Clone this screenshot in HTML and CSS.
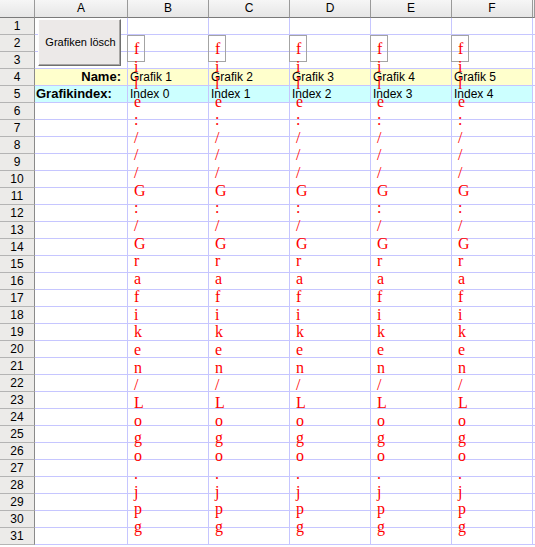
FILE: index.html
```html
<!DOCTYPE html>
<html lang="de">
<head>
  <meta charset="UTF-8" />
  <title>Grafiken</title>
  <link rel="stylesheet" href="styles.css">
</head>
<body>
  <div class="sheet">
    <div class="row head">
      <div class="corner"></div>
      <div class="col">A</div><div class="col">B</div><div class="col">C</div>
      <div class="col">D</div><div class="col">E</div><div class="col">F</div>
      <div class="col"></div>
    </div>

    <div class="row">
      <div class="num">1</div>
      <div class="cell anchor"><button class="btn">Grafiken lösch</button></div>
      <div class="cell"></div><div class="cell"></div><div class="cell"></div>
      <div class="cell"></div><div class="cell"></div><div class="cell"></div>
    </div>

    <!-- linked pictures that fail to load show their path as alt text -->
    <div class="row">
      <div class="num">2</div>
      <div class="cell"></div>
      <div class="cell anchor"><span class="pic"><span class="alt">file:///G:/Grafiken/Logo.jpg</span></span></div>
      <div class="cell anchor"><span class="pic"><span class="alt">file:///G:/Grafiken/Logo.jpg</span></span></div>
      <div class="cell anchor"><span class="pic"><span class="alt">file:///G:/Grafiken/Logo.jpg</span></span></div>
      <div class="cell anchor"><span class="pic"><span class="alt">file:///G:/Grafiken/Logo.jpg</span></span></div>
      <div class="cell anchor"><span class="pic"><span class="alt">file:///G:/Grafiken/Logo.jpg</span></span></div>
      <div class="cell"></div>
    </div>

    <div class="row">
      <div class="num">3</div>
      <div class="cell"></div><div class="cell"></div><div class="cell"></div><div class="cell"></div>
      <div class="cell"></div><div class="cell"></div><div class="cell"></div>
    </div>

    <div class="row name">
      <div class="num">4</div>
      <div class="cell label right">Name:</div>
      <div class="cell">Grafik 1</div><div class="cell">Grafik 2</div><div class="cell">Grafik 3</div>
      <div class="cell">Grafik 4</div><div class="cell">Grafik 5</div>
      <div class="cell blank"></div>
    </div>

    <div class="row index">
      <div class="num">5</div>
      <div class="cell label">Grafikindex:</div>
      <div class="cell">Index 0</div><div class="cell">Index 1</div><div class="cell">Index 2</div>
      <div class="cell">Index 3</div><div class="cell">Index 4</div>
      <div class="cell blank"></div>
    </div>

    <div class="row"><div class="num">6</div><div class="cell"></div><div class="cell"></div><div class="cell"></div><div class="cell"></div><div class="cell"></div><div class="cell"></div><div class="cell"></div></div>
    <div class="row"><div class="num">7</div><div class="cell"></div><div class="cell"></div><div class="cell"></div><div class="cell"></div><div class="cell"></div><div class="cell"></div><div class="cell"></div></div>
    <div class="row"><div class="num">8</div><div class="cell"></div><div class="cell"></div><div class="cell"></div><div class="cell"></div><div class="cell"></div><div class="cell"></div><div class="cell"></div></div>
    <div class="row"><div class="num">9</div><div class="cell"></div><div class="cell"></div><div class="cell"></div><div class="cell"></div><div class="cell"></div><div class="cell"></div><div class="cell"></div></div>
    <div class="row"><div class="num">10</div><div class="cell"></div><div class="cell"></div><div class="cell"></div><div class="cell"></div><div class="cell"></div><div class="cell"></div><div class="cell"></div></div>
    <div class="row"><div class="num">11</div><div class="cell"></div><div class="cell"></div><div class="cell"></div><div class="cell"></div><div class="cell"></div><div class="cell"></div><div class="cell"></div></div>
    <div class="row"><div class="num">12</div><div class="cell"></div><div class="cell"></div><div class="cell"></div><div class="cell"></div><div class="cell"></div><div class="cell"></div><div class="cell"></div></div>
    <div class="row"><div class="num">13</div><div class="cell"></div><div class="cell"></div><div class="cell"></div><div class="cell"></div><div class="cell"></div><div class="cell"></div><div class="cell"></div></div>
    <div class="row"><div class="num">14</div><div class="cell"></div><div class="cell"></div><div class="cell"></div><div class="cell"></div><div class="cell"></div><div class="cell"></div><div class="cell"></div></div>
    <div class="row"><div class="num">15</div><div class="cell"></div><div class="cell"></div><div class="cell"></div><div class="cell"></div><div class="cell"></div><div class="cell"></div><div class="cell"></div></div>
    <div class="row"><div class="num">16</div><div class="cell"></div><div class="cell"></div><div class="cell"></div><div class="cell"></div><div class="cell"></div><div class="cell"></div><div class="cell"></div></div>
    <div class="row"><div class="num">17</div><div class="cell"></div><div class="cell"></div><div class="cell"></div><div class="cell"></div><div class="cell"></div><div class="cell"></div><div class="cell"></div></div>
    <div class="row"><div class="num">18</div><div class="cell"></div><div class="cell"></div><div class="cell"></div><div class="cell"></div><div class="cell"></div><div class="cell"></div><div class="cell"></div></div>
    <div class="row"><div class="num">19</div><div class="cell"></div><div class="cell"></div><div class="cell"></div><div class="cell"></div><div class="cell"></div><div class="cell"></div><div class="cell"></div></div>
    <div class="row"><div class="num">20</div><div class="cell"></div><div class="cell"></div><div class="cell"></div><div class="cell"></div><div class="cell"></div><div class="cell"></div><div class="cell"></div></div>
    <div class="row"><div class="num">21</div><div class="cell"></div><div class="cell"></div><div class="cell"></div><div class="cell"></div><div class="cell"></div><div class="cell"></div><div class="cell"></div></div>
    <div class="row"><div class="num">22</div><div class="cell"></div><div class="cell"></div><div class="cell"></div><div class="cell"></div><div class="cell"></div><div class="cell"></div><div class="cell"></div></div>
    <div class="row"><div class="num">23</div><div class="cell"></div><div class="cell"></div><div class="cell"></div><div class="cell"></div><div class="cell"></div><div class="cell"></div><div class="cell"></div></div>
    <div class="row"><div class="num">24</div><div class="cell"></div><div class="cell"></div><div class="cell"></div><div class="cell"></div><div class="cell"></div><div class="cell"></div><div class="cell"></div></div>
    <div class="row"><div class="num">25</div><div class="cell"></div><div class="cell"></div><div class="cell"></div><div class="cell"></div><div class="cell"></div><div class="cell"></div><div class="cell"></div></div>
    <div class="row"><div class="num">26</div><div class="cell"></div><div class="cell"></div><div class="cell"></div><div class="cell"></div><div class="cell"></div><div class="cell"></div><div class="cell"></div></div>
    <div class="row"><div class="num">27</div><div class="cell"></div><div class="cell"></div><div class="cell"></div><div class="cell"></div><div class="cell"></div><div class="cell"></div><div class="cell"></div></div>
    <div class="row"><div class="num">28</div><div class="cell"></div><div class="cell"></div><div class="cell"></div><div class="cell"></div><div class="cell"></div><div class="cell"></div><div class="cell"></div></div>
    <div class="row"><div class="num">29</div><div class="cell"></div><div class="cell"></div><div class="cell"></div><div class="cell"></div><div class="cell"></div><div class="cell"></div><div class="cell"></div></div>
    <div class="row"><div class="num">30</div><div class="cell"></div><div class="cell"></div><div class="cell"></div><div class="cell"></div><div class="cell"></div><div class="cell"></div><div class="cell"></div></div>
    <div class="row"><div class="num">31</div><div class="cell"></div><div class="cell"></div><div class="cell"></div><div class="cell"></div><div class="cell"></div><div class="cell"></div><div class="cell"></div></div>
  </div>
</body>
</html>
```

FILE: styles.css
```css
* { margin: 0; padding: 0; box-sizing: border-box; }
body {
  font-family: "Liberation Sans", Arial, sans-serif;
  font-size: 12px; color: #000; background: #fff;
  overflow: hidden;
}

.sheet { width: 535px; }

.row {
  display: grid;
  grid-template-columns: 35px 93px repeat(5, 81px) 1fr;
  height: 17px;
}
.row.head { height: 18px; }

/* column and row headers */
.corner, .col {
  background: linear-gradient(#f6f6f6, #e6e6e6);
  border-right: 1px solid #9a9a9a;
  border-bottom: 1px solid #7a7a7a;
}
.col { text-align: center; line-height: 17px; font-size: 12px; }
.num {
  background: #ecebe9;
  border-right: 1px solid #8a8a8a;
  border-bottom: 1px solid #b4b4b4;
  text-align: center; line-height: 16px; font-size: 12px;
}

/* cells */
.cell {
  border-right: 1px solid #c6c6ff;
  border-bottom: 1px solid #c6c6ff;
  line-height: 16px; padding: 0 2px;
  white-space: nowrap;
}
.anchor { position: relative; }

.name .cell { background: #ffffcc; }
.index .cell { background: #ccffff; }
.name .cell.blank, .index .cell.blank { background: #fff; }

.label { font-weight: bold; font-size: 13px; padding-left: 1px; }
.right { text-align: right; padding-right: 6px; }

/* command button */
.btn {
  position: absolute; left: 3px; top: 1px;
  width: 83px; height: 47px;
  background: #ece9e8;
  border: 1px solid; border-color: #fdfdfd #6f6f6f #6f6f6f #fdfdfd;
  box-shadow: inset -1px -1px 0 #a8a6a4;
  font-family: "Liberation Sans", Arial, sans-serif;
  font-size: 11px; color: #000;
  white-space: nowrap; overflow: hidden;
  padding: 0 0 2px 2px;
  z-index: 2;
}

/* broken picture frame, alt text runs down one char per line */
.pic {
  position: absolute; left: -1px; top: 0;
  width: 18px; height: 27px;
  border: 1px solid #a4a4a4;
  z-index: 1;
}
.alt {
  display: block; width: 0;
  padding: 4px 0 0 6px;
  font-family: "Liberation Serif", "Times New Roman", serif;
  font-size: 16px; line-height: 17.7px;
  color: #ff0000;
  word-break: break-all; line-break: anywhere; white-space: normal;
}
```
